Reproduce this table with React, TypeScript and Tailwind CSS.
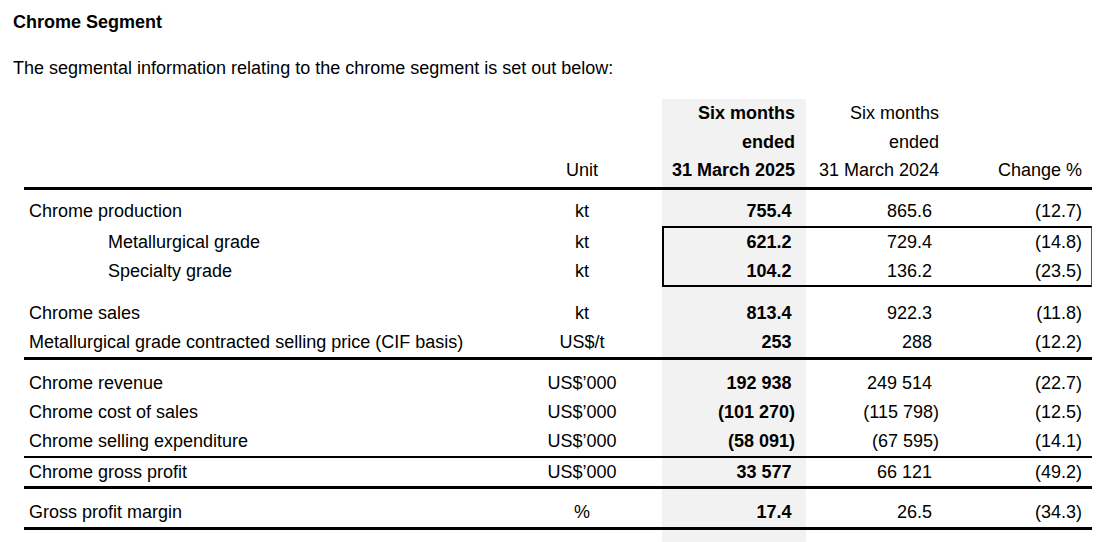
import React from "react";

type Row = {
  label: string;
  unit: string;
  cur: string;
  prev: string;
  change: string;
  indent?: boolean;
};

const GRID = "grid grid-cols-[506px_104px_28px_144px_144px_142px]";
const GRAY = "bg-[#f2f2f2]";

const production: Row = { label: "Chrome production", unit: "kt", cur: "755.4", prev: "865.6", change: "(12.7)" };

const grades: Row[] = [
  { label: "Metallurgical grade", unit: "kt", cur: "621.2", prev: "729.4", change: "(14.8)", indent: true },
  { label: "Specialty grade", unit: "kt", cur: "104.2", prev: "136.2", change: "(23.5)", indent: true },
];

const sales: Row[] = [
  { label: "Chrome sales", unit: "kt", cur: "813.4", prev: "922.3", change: "(11.8)" },
  { label: "Metallurgical grade contracted selling price (CIF basis)", unit: "US$/t", cur: "253", prev: "288", change: "(12.2)" },
];

const finance: Row[] = [
  { label: "Chrome revenue", unit: "US$\u2019000", cur: "192 938", prev: "249 514", change: "(22.7)" },
  { label: "Chrome cost of sales", unit: "US$\u2019000", cur: "(101 270)", prev: "(115 798)", change: "(12.5)" },
  { label: "Chrome selling expenditure", unit: "US$\u2019000", cur: "(58 091)", prev: "(67 595)", change: "(14.1)" },
];

const gross: Row = { label: "Chrome gross profit", unit: "US$\u2019000", cur: "33 577", prev: "66 121", change: "(49.2)" };
const margin: Row = { label: "Gross profit margin", unit: "%", cur: "17.4", prev: "26.5", change: "(34.3)" };

// positive figures sit left of the closing bracket of negative ones
function Num({ value, pad }: { value: string; pad: string }) {
  const neg = value.startsWith("(");
  return <span className={neg ? "" : pad}>{value}</span>;
}

function Label({ row }: { row: Row }) {
  return <div className={`${row.indent ? "pl-[84px]" : "pl-[5px]"} whitespace-nowrap`}>{row.label}</div>;
}

function Line({ row, h = "h-[29px] leading-[29px]" }: { row: Row; h?: string }) {
  return (
    <div className={`${GRID} ${h}`}>
      <Label row={row} />
      <div className="text-center">{row.unit}</div>
      <div />
      <div className={`${GRAY} text-right pr-[11px] font-bold`}>
        <Num value={row.cur} pad="pr-[3.5px]" />
      </div>
      <div className="text-right pr-[11px]">
        <Num value={row.prev} pad="pr-[7px]" />
      </div>
      <div className="text-right pr-[10px]">{row.change}</div>
    </div>
  );
}

function Gap({ h }: { h: string }) {
  return (
    <div className={`${GRID} ${h}`}>
      <div />
      <div />
      <div />
      <div className={GRAY} />
      <div />
      <div />
    </div>
  );
}

function Rule({ h = "h-[3px]" }: { h?: string }) {
  return <div className={`${h} bg-black`} />;
}

export default function App() {
  return (
    <div className="w-[1111px] h-[542px] overflow-hidden bg-white text-black font-['Liberation_Sans',Arial,sans-serif] text-[18px]">
      <div className="pl-[13px] pt-[8px]">
        <h1 className="font-bold leading-[28px]">Chrome Segment</h1>
        <p className="mt-[18px] leading-[28px]">
          The segmental information relating to the chrome segment is set out below:
        </p>
      </div>

      <div className="ml-[24px] w-[1068px] mt-[17px]">
        {/* header */}
        <div className={`${GRID} h-[88px] leading-[28.5px]`}>
          <div />
          <div className="flex flex-col justify-end pb-[2.5px] text-center">Unit</div>
          <div />
          <div className={`${GRAY} flex flex-col justify-end pb-[2.5px] pr-[11px] text-right font-bold`}>
            <span>Six months</span>
            <span>ended</span>
            <span>31 March 2025</span>
          </div>
          <div className="flex flex-col justify-end pb-[2.5px] pr-[11px] text-right">
            <span>Six months</span>
            <span>ended</span>
            <span>31 March 2024</span>
          </div>
          <div className="flex flex-col justify-end pb-[2.5px] pr-[10px] text-right">Change %</div>
        </div>
        <Rule />

        <Gap h="h-[7px]" />
        <Line row={production} />

        {/* boxed grade split */}
        <div className="flex">
          <div className="w-[638px] pt-[2px] pb-[2px]">
            {grades.map((r) => (
              <div key={r.label} className="grid grid-cols-[506px_104px_28px] h-[28.5px] leading-[28.5px]">
                <Label row={r} />
                <div className="text-center">{r.unit}</div>
                <div />
              </div>
            ))}
          </div>
          <div className="w-[430px] border-t-2 border-b-2 border-l-2 border-r border-black border-r-[#555]">
            {grades.map((r) => (
              <div key={r.label} className="grid grid-cols-[142px_144px_141px] h-[28.5px] leading-[28.5px]">
                <div className={`${GRAY} text-right pr-[11px] font-bold`}>
                  <Num value={r.cur} pad="pr-[3.5px]" />
                </div>
                <div className="text-right pr-[11px]">
                  <Num value={r.prev} pad="pr-[7px]" />
                </div>
                <div className="text-right pr-[9px]">{r.change}</div>
              </div>
            ))}
          </div>
        </div>

        <Gap h="h-[12px]" />
        {sales.map((r) => (
          <Line key={r.label} row={r} />
        ))}
        <Rule />

        <Gap h="h-[8.5px]" />
        {finance.map((r) => (
          <Line key={r.label} row={r} />
        ))}
        <Rule h="h-[2px]" />
        <Line row={gross} h="h-[28.5px] leading-[28.5px]" />
        <Rule />

        <Gap h="h-[8.5px]" />
        <Line row={margin} />
        <Rule />
        <Gap h="h-[20px]" />
      </div>
    </div>
  );
}
